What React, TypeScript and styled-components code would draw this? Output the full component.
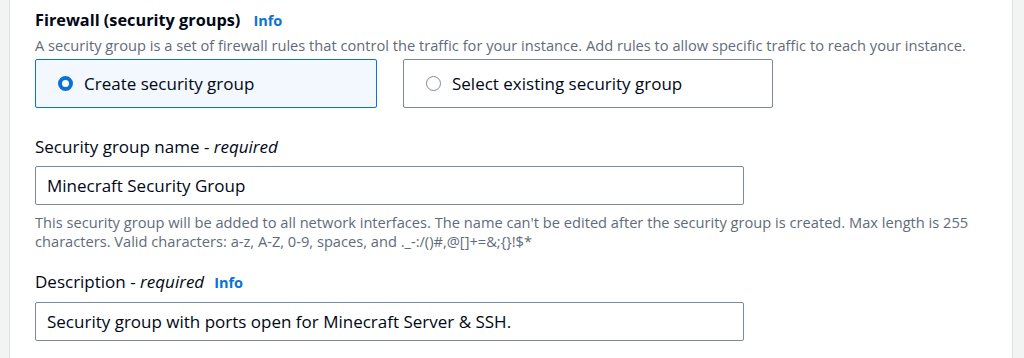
import styled, { createGlobalStyle } from "styled-components";

const GlobalStyle = createGlobalStyle`
    body {
        margin: 0;
        background-color: #f2f3f3;
        font-family: "Open Sans", "Noto Sans", sans-serif;
        color: #000716;
    }
`;

const Page = styled.div`
    display: flex;
    height: 358px;
    padding-left: 9px;
    overflow: hidden;
`;

const Panel = styled.section`
    width: 1004px;
    background-color: #ffffff;
    border-left: 1px solid #dfe1e3;
    border-right: 1px solid #dfe1e3;
    padding: 7px 0 0 25px;
    box-sizing: border-box;
`;

const Title = styled.h2`
    margin: 0;
    font-size: 16.3px;
    font-weight: 700;
    line-height: 26px;
    display: flex;
    align-items: baseline;
    gap: 13px;
`;

const Info = styled.a`
    color: #0972d3;
    font-weight: 700;
    font-size: 14.5px;
    text-decoration: none;
`;

const Hint = styled.p`
    margin: 0;
    font-size: 14.65px;
    line-height: 22px;
    color: #5f6b7a;
`;

const TileRow = styled.div`
    display: flex;
    gap: 26px;
    margin-top: 3px;
`;

const Tile = styled.label<{ $selected?: boolean; $width: number }>`
    box-sizing: border-box;
    width: ${(p) => p.$width}px;
    height: 49px;
    display: flex;
    align-items: center;
    gap: 11px;
    padding-left: 22px;
    border: 1px solid ${(p) => (p.$selected ? "#0972d3" : "#7d8998")};
    border-radius: 2px;
    background-color: ${(p) => (p.$selected ? "#f2f8fd" : "#ffffff")};
    font-size: 17px;
`;

const Radio = styled.span<{ $checked?: boolean }>`
    box-sizing: border-box;
    width: 15px;
    height: 15px;
    border-radius: 50%;
    border: ${(p) => (p.$checked ? "4px solid #0972d3" : "1.5px solid #7d8998")};
    background-color: #ffffff;
`;

const Field = styled.div<{ $top: number }>`
    margin-top: ${(p) => p.$top}px;
`;

const Label = styled.div`
    font-size: 17px;
    line-height: 24px;
    display: flex;
    align-items: baseline;
    gap: 10px;

    em {
        font-style: italic;
    }
`;

const Input = styled.div`
    box-sizing: border-box;
    width: 709px;
    height: 39px;
    margin-top: 7px;
    display: flex;
    align-items: center;
    padding-left: 11px;
    border: 1px solid #7d8998;
    border-radius: 2px;
    font-size: 17px;
`;

const Help = styled(Hint)`
    margin-top: 8px;
    width: 965px;
    line-height: 18.5px;
`;

const nameHelp =
    "This security group will be added to all network interfaces. The name can't be edited after the security group is created. Max length is 255 characters. Valid characters: a-z, A-Z, 0-9, spaces, and ._-:/()#,@[]+=&;{}!$*";

export default function App() {
    return (
        <>
            <GlobalStyle />
            <Page>
                <Panel>
                    <Title>
                        Firewall (security groups) <Info>Info</Info>
                    </Title>
                    <Hint>
                        A security group is a set of firewall rules that control the traffic for your instance. Add rules to allow specific traffic to reach your instance.
                    </Hint>
                    <TileRow>
                        <Tile $selected $width={342}>
                            <Radio $checked />
                            Create security group
                        </Tile>
                        <Tile $width={370}>
                            <Radio />
                            Select existing security group
                        </Tile>
                    </TileRow>

                    <Field $top={27}>
                        <Label>
                            <span>Security group name - <em>required</em></span>
                        </Label>
                        <Input>Minecraft Security Group</Input>
                        <Help>{nameHelp}</Help>
                    </Field>

                    <Field $top={20}>
                        <Label>
                            <span>Description - <em>required</em></span>
                            <Info>Info</Info>
                        </Label>
                        <Input>Security group with ports open for Minecraft Server &amp; SSH.</Input>
                    </Field>
                </Panel>
            </Page>
        </>
    );
}
